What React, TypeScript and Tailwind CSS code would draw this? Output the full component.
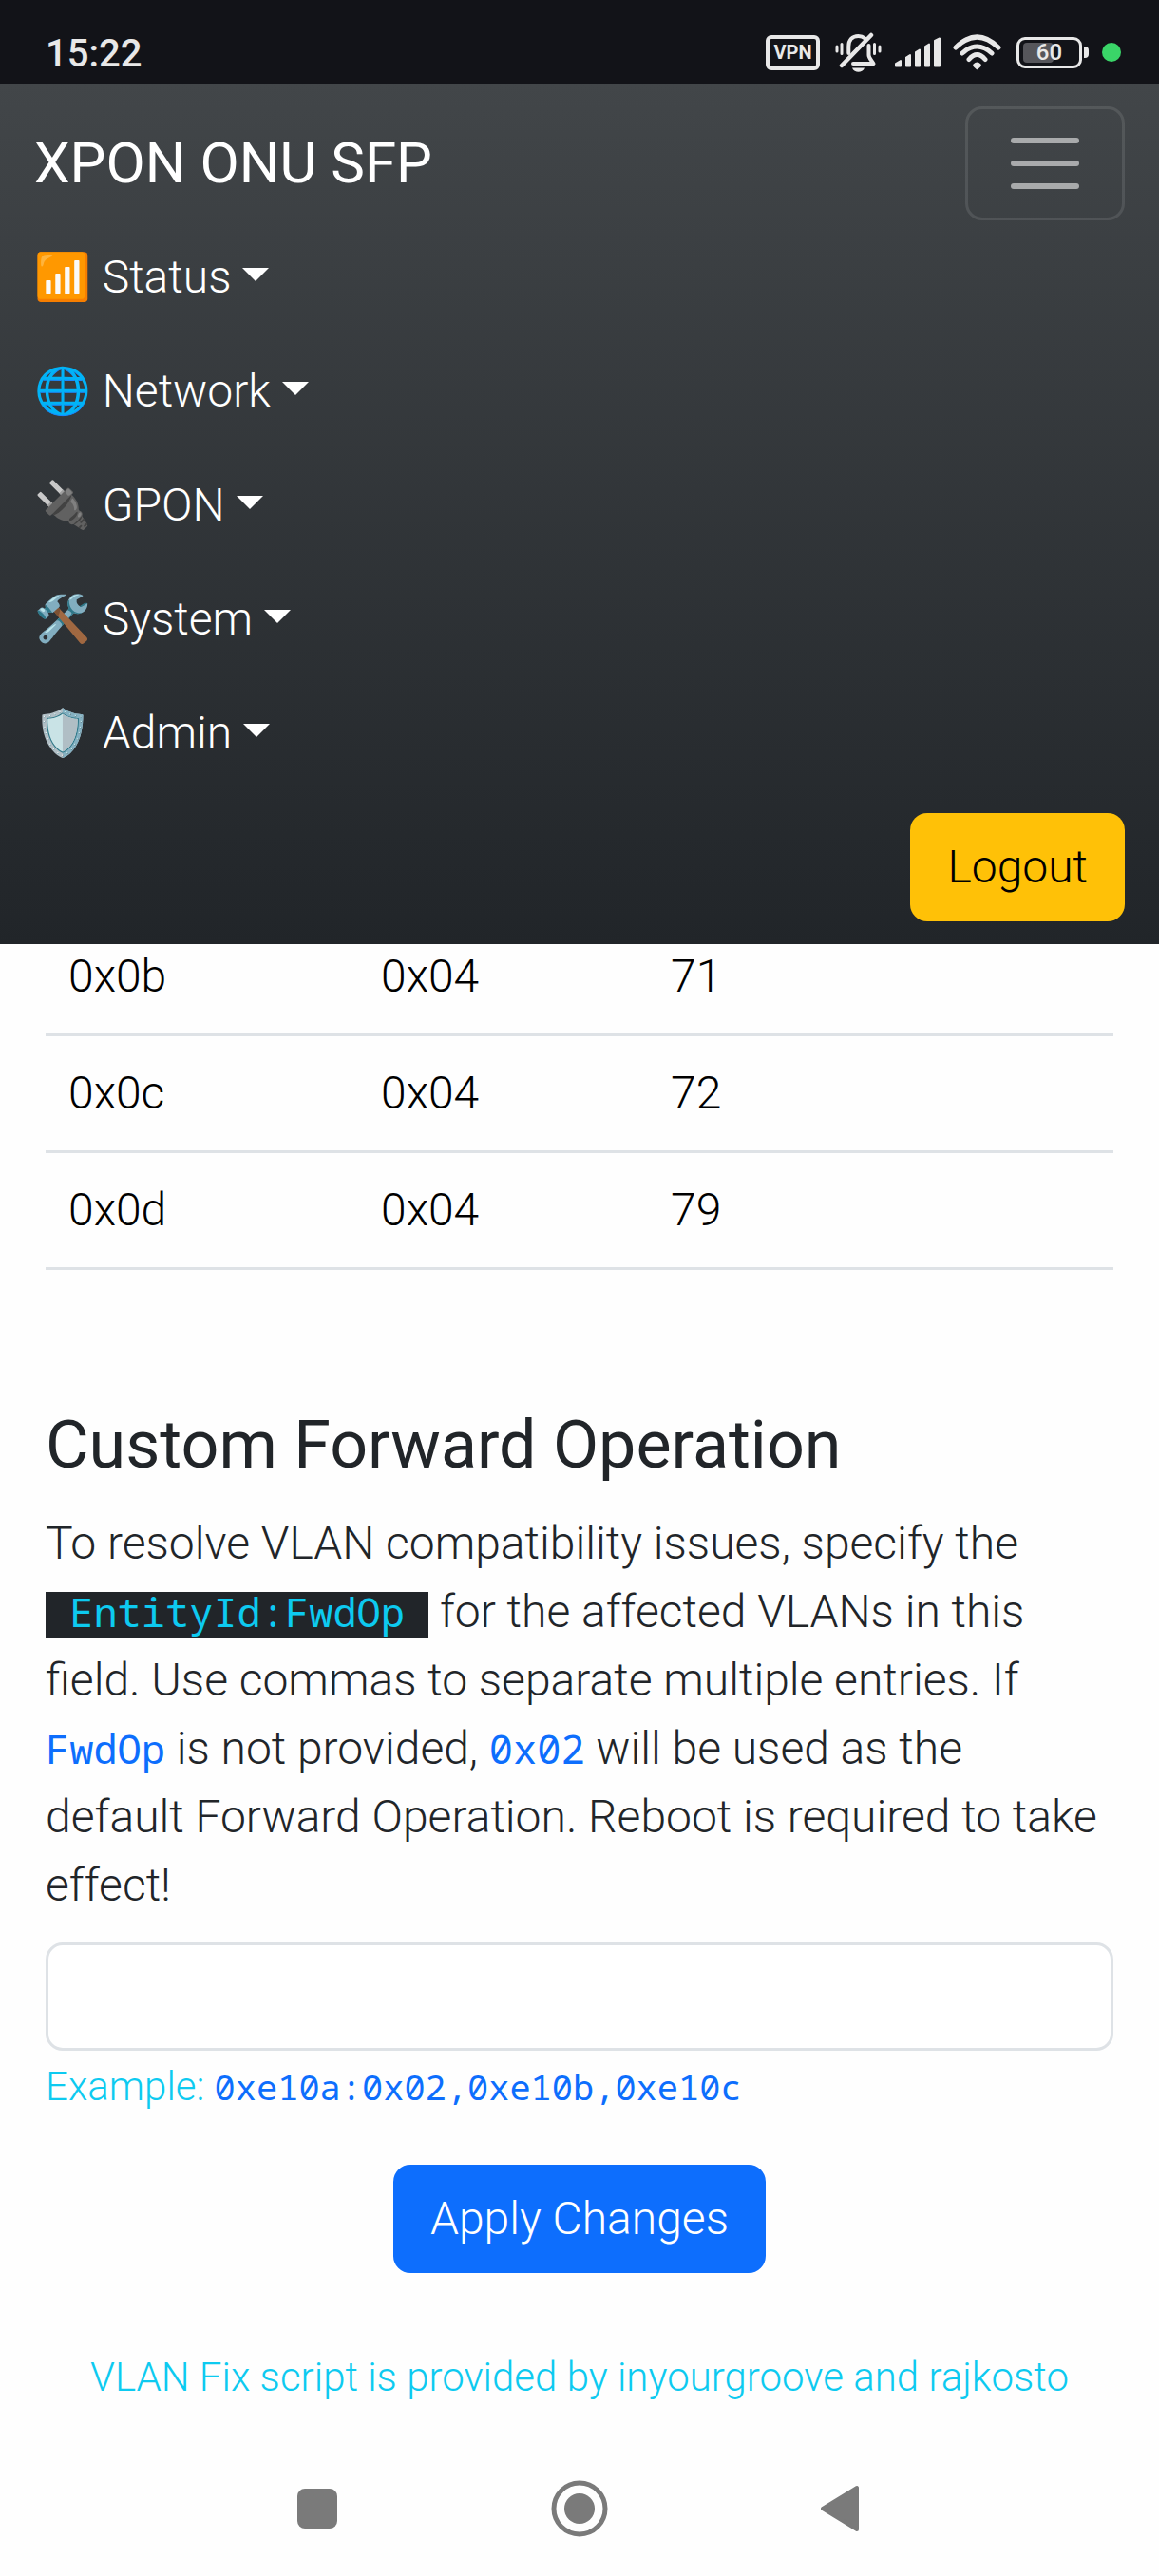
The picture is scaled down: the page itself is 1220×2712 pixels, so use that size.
const menu = [
  { icon: '📶', label: 'Status' },
  { icon: '🌐', label: 'Network' },
  { icon: '🔌', label: 'GPON' },
  { icon: '🛠️', label: 'System' },
  { icon: '🛡️', label: 'Admin' },
];

const rows = [
  ['0x0b', '0x04', '71'],
  ['0x0c', '0x04', '72'],
  ['0x0d', '0x04', '79'],
];

function StatusBar() {
  return (
    <div className="h-[88px] bg-[#121318] text-[#e8e8e8] flex items-center justify-between pl-12 pr-10 pt-[22px]">
      <span className="pt-1 text-[40px] leading-[44px] font-medium">15:22</span>
      <div className="flex items-center h-[42px]">
        <span className="w-[57px] h-[37px] border-4 border-[#e8e8e8] rounded-md flex items-center justify-center text-xl leading-none font-bold">VPN</span>
        {/* Bell off */}
        <svg className="ml-4 w-[50px] h-[42px]" viewBox="0 0 50 42" fill="none" stroke="#e8e8e8" strokeLinecap="round">
          <path d="M2 15v5M7 12.500v10M41.500 12.500v10M47 15v5" strokeWidth="3" />
          <path d="M14.300 22V15C14.300 8 18 4 24.500 4c3 0 5 .8 7 2.500" strokeWidth="4" />
          <path d="M35.500 14v10c0 3 2.500 5 5 9H19" strokeWidth="4" strokeLinejoin="round" />
          <path d="M7 35L38 3" strokeWidth="4.500" />
          <path d="M18 37.500h13c-1 3-4 4.300-6.500 4.300S19 40.500 18 37.500z" fill="#e8e8e8" stroke="none" />
        </svg>
        {/* Signal */}
        <svg className="ml-3 w-[50px] h-8" viewBox="0 0 50 32" fill="#e8e8e8" stroke="#e8e8e8" strokeWidth="2" strokeLinejoin="round">
          <path d="M2 30.500v-2.500l5-3v5.500zM13 30.500V21.500l4-2.500v11.500zM23 30.500V16l4-2.500v17zM33 30.500V10l4-2.500v23zM43 30.500V4l5-2.500v29z" />
        </svg>
        {/* Wifi */}
        <svg className="ml-3 w-[51px] h-[38px]" viewBox="0 0 51 38" fill="none" stroke="#e8e8e8" strokeWidth="5" strokeLinecap="round">
          <path d="M3 14Q25.500 -8 48 14M10 20Q25.500 6 41 20M17 26.500Q25.500 16.500 34 26.500" />
          <path d="M21.500 31.500q4-4 8 0 q1 1.500-.5 3l-2.500 2.300q-1 1-2 0l-2.500-2.300q-1.500-1.500-.5-3z" fill="#e8e8e8" stroke="none" />
        </svg>
        <span className="ml-4 relative w-[69px] h-[33px] border-[3px] border-[#e8e8e8] rounded-[9px] flex items-center justify-center">
          <span className="absolute left-1 top-[3px] w-8 h-[21px] rounded-sm bg-[#56565b]" />
          <span className="relative text-2xl leading-none font-medium">60</span>
        </span>
        <span className="ml-0.5 w-[5px] h-3 rounded-r bg-[#e8e8e8]" />
        <span className="ml-3.5 w-5 h-5 rounded-full bg-[#3ad568]" />
      </div>
    </div>
  );
}

function Navbar() {
  return (
    <nav className="relative z-10 bg-linear-to-b from-[#424649] to-[#212529] px-9 py-6 text-white">
      <div className="flex items-center justify-between">
        <a href="#" className="text-6xl font-normal">XPON ONU SFP</a>
        <button type="button" aria-label="Toggle navigation" className="w-[168px] h-[120px] rounded-[18px] border-[3px] border-white/10 flex flex-col items-center justify-center gap-[18px]">
          <span className="w-[72px] h-1.5 rounded-full bg-white/55" />
          <span className="w-[72px] h-1.5 rounded-full bg-white/55" />
          <span className="w-[72px] h-1.5 rounded-full bg-white/55" />
        </button>
      </div>
      <ul className="flex flex-col">
        {menu.map((item) => (
          <li key={item.label}>
            <button type="button" className="flex items-center py-6 leading-[72px]">
              <span>{item.icon} {item.label}</span>
              <span className="ml-3 mb-1.5 border-x-[14px] border-t-[14px] border-x-transparent border-t-white" />
            </button>
          </li>
        ))}
      </ul>
      <div className="flex justify-end mt-6">
        <button type="button" className="rounded-[18px] bg-[#ffc107] text-black px-[39px] py-[21px] leading-[72px]">Logout</button>
      </div>
    </nav>
  );
}

function SystemKeys() {
  return (
    <div className="mt-auto h-[142px] px-[312px] flex items-center justify-between">
      <button type="button" aria-label="Recent apps" className="w-11 h-[42px] flex justify-center">
        <span className="w-[42px] h-[42px] rounded-lg bg-[#7a7a7a]" />
      </button>
      <button type="button" aria-label="Home">
        <svg className="w-[60px] h-[60px]" viewBox="0 0 60 60">
          <circle cx="30" cy="30" r="27" fill="none" stroke="#7a7a7a" strokeWidth="5" />
          <circle cx="30" cy="30" r="16" fill="#7a7a7a" />
        </svg>
      </button>
      <button type="button" aria-label="Back">
        <svg className="w-11 h-[50px]" viewBox="0 0 44 50" fill="#7a7a7a" stroke="#7a7a7a" strokeWidth="4" strokeLinejoin="round">
          <path d="M2 25L38 3v44z" />
        </svg>
      </button>
    </div>
  );
}

export default function App() {
  return (
    <div className="min-h-screen flex flex-col bg-[#fefefe] text-[#212529] font-['Roboto',sans-serif] text-5xl font-light">
      <StatusBar />
      <Navbar />
      <main className="px-12">
        {/* First row is scrolled under the navbar */}
        <table className="w-full -mt-[26px] text-black leading-[72px]">
          <tbody>
            {rows.map((row) => (
              <tr key={row[0]} className="border-b-[3px] border-[#dee2e6]">
                <td className="w-[329px] p-6">{row[0]}</td>
                <td className="w-[305px] p-6">{row[1]}</td>
                <td className="p-6">{row[2]}</td>
              </tr>
            ))}
          </tbody>
        </table>
        <h3 className="mt-[142px] mb-[26px] text-[70px] leading-[84px] font-normal">Custom Forward Operation</h3>
        <form>
          <label htmlFor="fwdop" className="block mb-6 pr-2 leading-[72px]">
            To resolve VLAN compatibility issues, specify the{' '}
            <code className="inline-block pb-2 bg-[#212529] text-[#0dcaf0] text-[42px] leading-[41px] font-normal font-['Noto_Sans_Mono','DejaVu_Sans_Mono',monospace]">&nbsp;EntityId:FwdOp&nbsp;</code>{' '}
            for the affected VLANs in this field. Use commas to separate multiple entries. If{' '}
            <code className="text-[#0d6efd] text-[42px] leading-none font-normal font-['Noto_Sans_Mono','DejaVu_Sans_Mono',monospace]">FwdOp</code> is not provided,{' '}
            <code className="text-[#0d6efd] text-[42px] leading-none font-normal font-['Noto_Sans_Mono','DejaVu_Sans_Mono',monospace]">0x02</code> will be used as the
            default Forward Operation. Reboot is required to take effect!
          </label>
          <input id="fwdop" type="text" className="block w-full h-[114px] px-9 rounded-[18px] border-[3px] border-[#dee2e6] bg-white" />
          <p className="mt-1.5 text-[42px] leading-[63px] text-[#0dcaf0]">
            Example: <code className="text-[#0d6efd] text-[37px] leading-none font-normal font-['Noto_Sans_Mono','DejaVu_Sans_Mono',monospace]">0xe10a:0x02,0xe10b,0xe10c</code>
          </p>
          <div className="mt-[51px] flex justify-center">
            <button type="submit" className="rounded-[18px] bg-[#0d6efd] text-white px-[39px] py-[21px] leading-[72px]">Apply Changes</button>
          </div>
        </form>
        <p className="mt-[78px] text-center text-[42px] leading-[63px] text-[#0dcaf0]">VLAN Fix script is provided by inyourgroove and rajkosto</p>
      </main>
      <SystemKeys />
    </div>
  );
}
